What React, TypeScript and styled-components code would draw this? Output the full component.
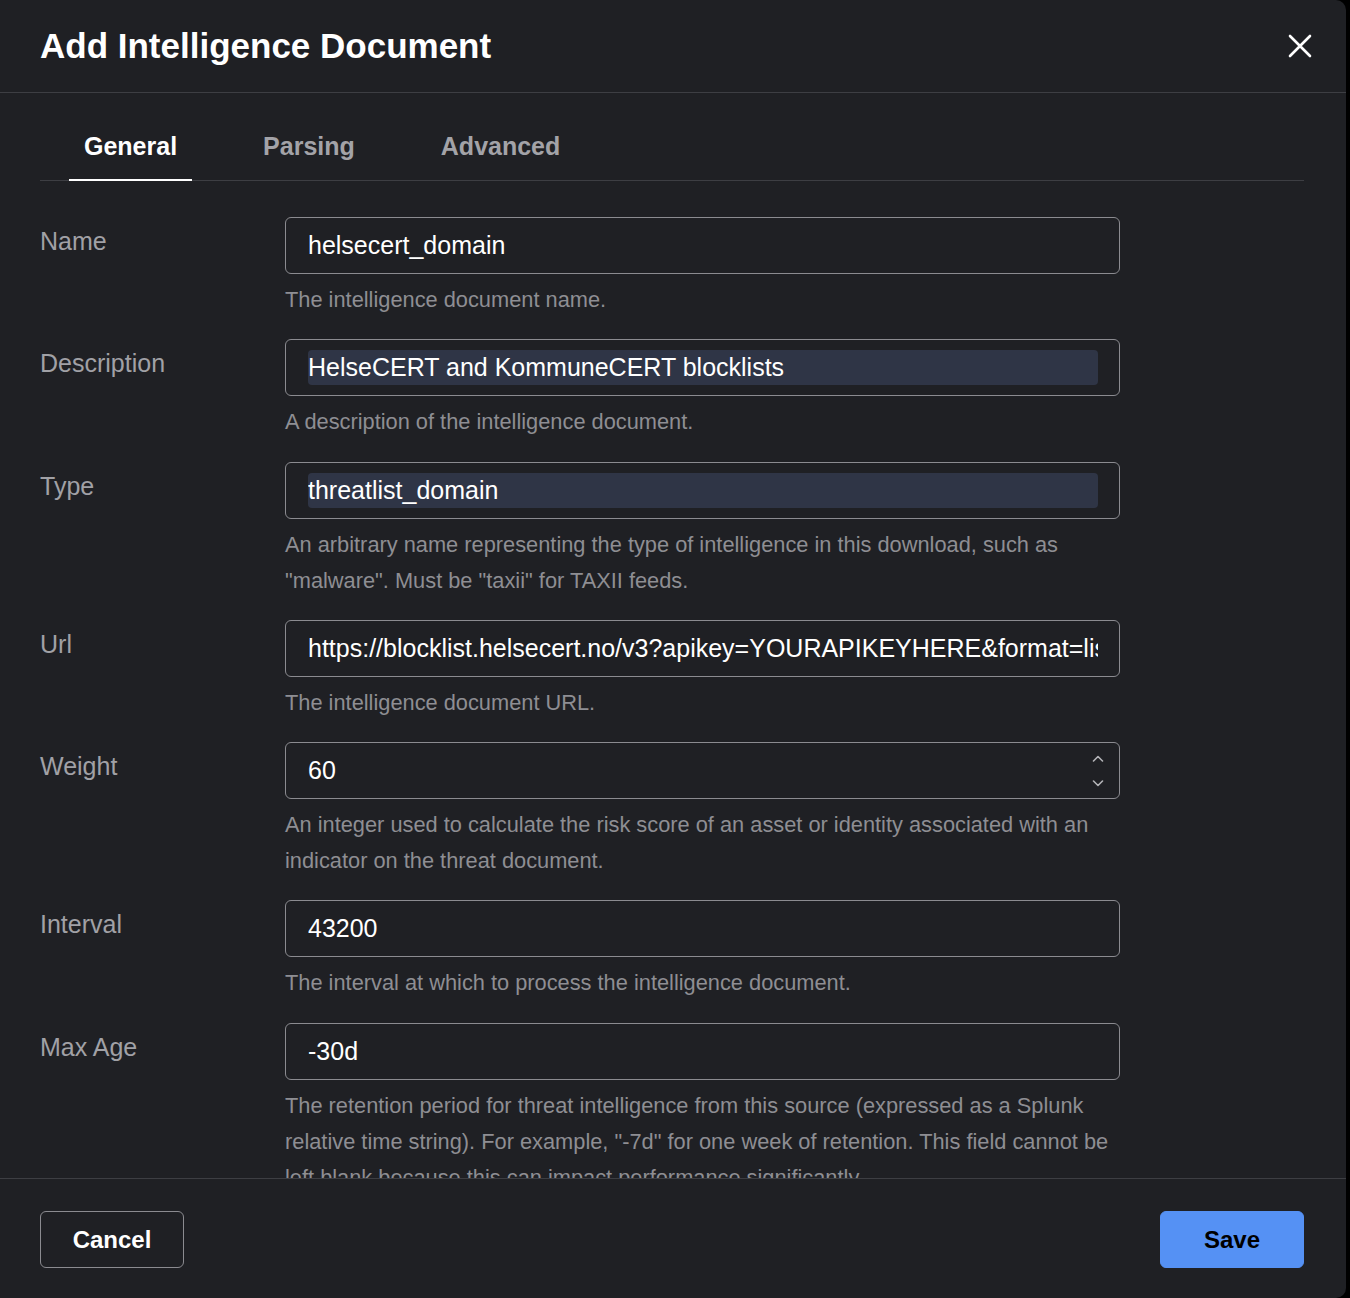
import React from "react";
import styled, { createGlobalStyle } from "styled-components";

const GlobalStyle = createGlobalStyle`
  html, body { margin: 0; padding: 0; background: #000; }
  body { font-family: "Liberation Sans", Arial, Helvetica, sans-serif; }
  * { box-sizing: border-box; }
`;

const Panel = styled.div`
  width: 1346px;
  height: 1298px;
  background: #1f2024;
  border-radius: 0 10px 10px 0;
  display: flex;
  flex-direction: column;
  overflow: hidden;
  color: #fff;
`;

const Header = styled.header`
  height: 93px;
  flex: none;
  border-bottom: 1px solid #3d3e43;
  padding: 0 30px 0 40px;
  display: flex;
  align-items: center;
  justify-content: space-between;
`;

const Title = styled.h1`
  margin: 0;
  font-size: 35px;
  font-weight: 700;
  line-height: 40px;
  color: #fff;
`;

const CloseButton = styled.button`
  width: 32px;
  height: 32px;
  padding: 0;
  border: 0;
  background: transparent;
  display: flex;
  align-items: center;
  justify-content: center;
  cursor: pointer;
`;

const TabsSection = styled.div`
  flex: none;
  padding: 20px 42px 0 40px;
`;

const TabList = styled.div`
  display: flex;
  gap: 56px;
  padding-left: 29px;
  border-bottom: 1px solid #3d3e43;
`;

const Tab = styled.button<{ $active?: boolean }>`
  height: 68px;
  margin-bottom: -1px;
  padding: 0 15px;
  border: 0;
  border-bottom: 2px solid ${(p) => (p.$active ? "#ffffff" : "transparent")};
  background: transparent;
  font-family: inherit;
  font-size: 25px;
  font-weight: 700;
  color: ${(p) => (p.$active ? "#ffffff" : "#a3a3a8")};
  display: flex;
  align-items: center;
  cursor: pointer;
`;

const Form = styled.div`
  flex: 1;
  overflow: hidden;
  padding: 36px 42px 0 40px;
  display: flex;
  flex-direction: column;
  gap: 21.3px;
`;

const Field = styled.div`
  display: grid;
  grid-template-columns: 245px 835px;
`;

const Label = styled.label`
  padding-top: 10px;
  font-size: 25px;
  line-height: 28px;
  color: #a1a1a6;
`;

const Control = styled.div`
  display: flex;
  flex-direction: column;
`;

const InputBox = styled.div`
  height: 57px;
  border: 1px solid #8b8b90;
  border-radius: 6px;
  padding: 10px 21px 10px 22px;
  display: flex;
  align-items: center;
`;

const TextInput = styled.input<{ $filled?: boolean }>`
  flex: 1;
  min-width: 0;
  height: 35px;
  padding: 0;
  border: 0;
  border-radius: 4px;
  outline: none;
  background: ${(p) => (p.$filled ? "#2f3546" : "transparent")};
  color: #fff;
  font-family: inherit;
  font-size: 25px;
`;

const Spinner = styled.div`
  width: 14px;
  margin-right: -7px;
  display: flex;
  flex-direction: column;
  align-items: center;
  gap: 18px;
`;

const Help = styled.div`
  margin-top: 8px;
  font-size: 21.8px;
  line-height: 36px;
  color: #8e8e93;
`;

const Footer = styled.footer`
  flex: none;
  height: 120px;
  border-top: 1px solid #3d3e43;
  padding: 32px 42px 0 40px;
  display: flex;
  justify-content: space-between;
  align-items: flex-start;
`;

const Button = styled.button<{ $primary?: boolean }>`
  width: 144px;
  height: 57px;
  border-radius: 6px;
  border: 1px solid ${(p) => (p.$primary ? "#5591f4" : "#8b8b90")};
  background: ${(p) => (p.$primary ? "#5591f4" : "transparent")};
  color: ${(p) => (p.$primary ? "#000" : "#fff")};
  font-family: inherit;
  font-size: 24px;
  font-weight: 700;
  cursor: pointer;
`;

const Chevron = ({ up }: { up?: boolean }) => (
  <svg width="12" height="7" viewBox="0 0 12 7" fill="none">
    <path
      d={up ? "M1.5 6 L6 1.5 L10.5 6" : "M1.5 1 L6 5.5 L10.5 1"}
      stroke="#b4b4b8"
      strokeWidth="1.6"
      strokeLinecap="round"
      strokeLinejoin="round"
    />
  </svg>
);

type FieldDef = {
  label: string;
  value: string;
  help: string;
  filled?: boolean;
  number?: boolean;
};

const fields: FieldDef[] = [
  { label: "Name", value: "helsecert_domain", help: "The intelligence document name." },
  {
    label: "Description",
    value: "HelseCERT and KommuneCERT blocklists",
    help: "A description of the intelligence document.",
    filled: true,
  },
  {
    label: "Type",
    value: "threatlist_domain",
    help: 'An arbitrary name representing the type of intelligence in this download, such as "malware". Must be "taxii" for TAXII feeds.',
    filled: true,
  },
  {
    label: "Url",
    value: "https://blocklist.helsecert.no/v3?apikey=YOURAPIKEYHERE&format=list_domain",
    help: "The intelligence document URL.",
  },
  {
    label: "Weight",
    value: "60",
    help: "An integer used to calculate the risk score of an asset or identity associated with an indicator on the threat document.",
    number: true,
  },
  { label: "Interval", value: "43200", help: "The interval at which to process the intelligence document." },
  {
    label: "Max Age",
    value: "-30d",
    help: 'The retention period for threat intelligence from this source (expressed as a Splunk relative time string). For example, "-7d" for one week of retention. This field cannot be left blank because this can impact performance significantly.',
  },
];

export default function App() {
  return (
    <>
      <GlobalStyle />
      <Panel>
        <Header>
          <Title>Add Intelligence Document</Title>
          <CloseButton aria-label="Close">
            <svg width="24" height="24" viewBox="0 0 24 24" fill="none">
              <path d="M2 2 L22 22 M22 2 L2 22" stroke="#fff" strokeWidth="2.6" strokeLinecap="round" />
            </svg>
          </CloseButton>
        </Header>
        <TabsSection>
          <TabList>
            <Tab $active>General</Tab>
            <Tab>Parsing</Tab>
            <Tab>Advanced</Tab>
          </TabList>
        </TabsSection>
        <Form>
          {fields.map((f) => (
            <Field key={f.label}>
              <Label>{f.label}</Label>
              <Control>
                <InputBox>
                  <TextInput $filled={f.filled} value={f.value} readOnly />
                  {f.number && (
                    <Spinner>
                      <Chevron up />
                      <Chevron />
                    </Spinner>
                  )}
                </InputBox>
                <Help>{f.help}</Help>
              </Control>
            </Field>
          ))}
        </Form>
        <Footer>
          <Button>Cancel</Button>
          <Button $primary>Save</Button>
        </Footer>
      </Panel>
    </>
  );
}
